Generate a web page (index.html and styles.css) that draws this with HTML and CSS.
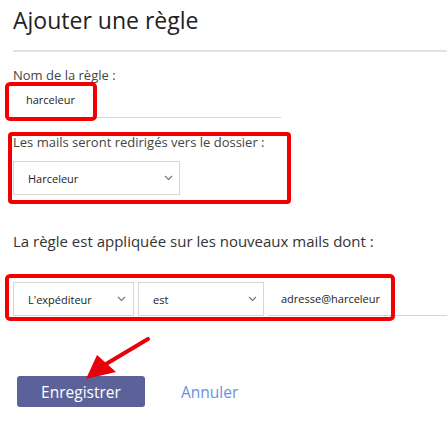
FILE: index.html
```html
<!DOCTYPE html>
<html lang="fr">
<head>
    <meta charset="UTF-8">
    <meta name="viewport" content="width=device-width, initial-scale=1.0">
    <title>Ajouter une règle</title>
    <link rel="stylesheet" href="styles.css">
</head>
<body>
    <div class="page">
        <h1>Ajouter une règle</h1>

        <label class="label" for="nom">Nom de la règle :</label>
        <div class="hl hl-nom">
            <div class="input input-nom" id="nom">harceleur</div>
        </div>

        <div class="box-dossier">
            <div class="label label-dossier">Les mails seront redirigés vers le dossier :</div>
            <div class="select select-dossier">
                <span>Harceleur</span>
                <svg class="chevron" width="9" height="6" viewBox="0 0 9 6"><path d="M1 1l3.5 3.5L8 1" fill="none" stroke="#777" stroke-width="1.2"/></svg>
            </div>
        </div>

        <p class="intro">La règle est appliquée sur les nouveaux mails dont :</p>

        <div class="hl hl-condition">
            <div class="condition">
                <div class="select select-champ">
                    <span>L'expéditeur</span>
                    <svg class="chevron" width="9" height="6" viewBox="0 0 9 6"><path d="M1 1l3.5 3.5L8 1" fill="none" stroke="#777" stroke-width="1.2"/></svg>
                </div>
                <div class="select select-op">
                    <span>est</span>
                    <svg class="chevron" width="9" height="6" viewBox="0 0 9 6"><path d="M1 1l3.5 3.5L8 1" fill="none" stroke="#777" stroke-width="1.2"/></svg>
                </div>
                <div class="input input-valeur">adresse@harceleur</div>
            </div>
        </div>

        <div class="actions">
            <button class="btn-save">Enregistrer</button>
            <a class="btn-cancel" href="#">Annuler</a>
            <svg class="arrow" width="80" height="60" viewBox="0 0 80 60">
                <path d="M71 9L24 37" stroke="#e8000b" stroke-width="4" stroke-linecap="round"/>
                <polygon points="9,49 20,25 39,42" fill="#e8000b"/>
            </svg>
        </div>
    </div>
</body>
</html>
```

FILE: styles.css
```css
body {
    margin: 0;
    font-family: 'Open Sans', 'Noto Sans', sans-serif;
    color: #333;
    background-color: #fff;
}
.page {
    padding: 0 0 0 13px;
}
h1 {
    margin: 0;
    padding: 5px 0 14px 0;
    font-size: 23px;
    font-weight: 400;
    line-height: 31px;
    color: #222;
    border-bottom: 2px solid #e2e2e2;
}
.label {
    display: block;
    font-size: 13px;
    line-height: 16px;
    color: #444;
}
label.label {
    margin-top: 15px;
}
.hl {
    position: relative;
}
.hl::after {
    content: '';
    position: absolute;
    border: 4px solid #f00000;
    border-radius: 5px;
    pointer-events: none;
}
.hl-nom::after {
    left: -8px;
    top: -1px;
    width: 84px;
    height: 31px;
}
.input {
    box-sizing: border-box;
    height: 35px;
    font-size: 11px;
    line-height: 34px;
    color: #222;
    border-bottom: 1px solid #d4d4d4;
}
.input-nom {
    width: 268px;
    padding-left: 13px;
}
.box-dossier {
    margin: 14px 0 0 -5px;
    width: 274px;
    border: 4px solid #f00000;
    border-radius: 4px;
    padding: 0 0 5px 1px;
}
.label-dossier {
    margin-top: -2px;
    line-height: 17px;
}
.select {
    box-sizing: border-box;
    display: flex;
    align-items: center;
    justify-content: space-between;
    height: 34px;
    border: 1px solid #d6d6d6;
    font-size: 11px;
    color: #222;
    background-color: #fff;
}
.select-dossier {
    margin-top: 10px;
    width: 167px;
    padding: 0 6px 0 14px;
}
.intro {
    margin: 27px 0 0 0;
    font-size: 15px;
    line-height: 20px;
    color: #333;
}
.hl-condition {
    margin-top: 31px;
}
.hl-condition::after {
    left: -8px;
    top: -8px;
    width: 382px;
    height: 39px;
}
.condition {
    display: flex;
    gap: 4px;
}
.select-champ {
    width: 121px;
    padding: 0 7px 0 14px;
}
.select-op {
    width: 126px;
    padding: 0 6px 0 14px;
}
.input-valeur {
    flex: 1;
    height: 34px;
    padding-left: 13px;
}
.actions {
    position: relative;
    display: flex;
    align-items: center;
    gap: 36px;
    margin: 60px 0 0 4px;
}
.btn-save {
    width: 128px;
    height: 31px;
    border: none;
    border-radius: 3px;
    background-color: #5c6299;
    color: #fff;
    font-family: inherit;
    font-size: 15.5px;
}
.btn-cancel {
    font-size: 15.5px;
    color: #6b8fe3;
    text-decoration: none;
}
.arrow {
    position: absolute;
    left: 60px;
    top: -46px;
}
```
